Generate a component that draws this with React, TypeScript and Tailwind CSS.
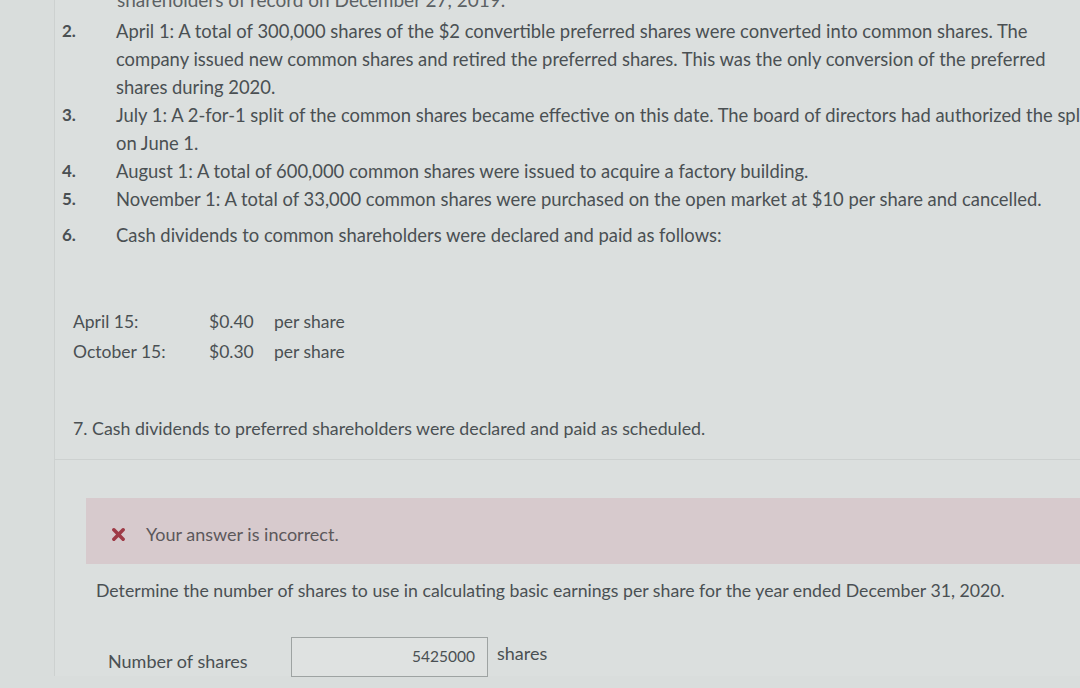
import React from "react";

const items = [
  {
    n: "2.",
    lines: [
      "April 1: A total of 300,000 shares of the $2 convertible preferred shares were converted into common shares. The",
      "company issued new common shares and retired the preferred shares. This was the only conversion of the preferred",
      "shares during 2020.",
    ],
  },
  {
    n: "3.",
    lines: [
      "July 1: A 2-for-1 split of the common shares became effective on this date. The board of directors had authorized the split",
      "on June 1.",
    ],
  },
  { n: "4.", lines: ["August 1: A total of 600,000 common shares were issued to acquire a factory building."] },
  { n: "5.", lines: ["November 1: A total of 33,000 common shares were purchased on the open market at $10 per share and cancelled."] },
  { n: "6.", lines: ["Cash dividends to common shareholders were declared and paid as follows:"], extra: true },
];

export default function App() {
  return (
    <div className="w-[1080px] h-[688px] overflow-hidden bg-[#d9dddc] text-[#4a5053] font-['Lato','Liberation_Sans',sans-serif]">
      <div className="ml-[54px] h-full border-l border-[#cdd1d0] bg-[#dbdfde]">
        <div className="-mt-[12px] pl-[62px] h-[24px] text-[19px] leading-[24px] text-[#5b6164] whitespace-nowrap">
          shareholders of record on December 27, 2019.
        </div>

        <ol className="mt-[5px] flex flex-col text-[18.4px] leading-[28px]">
          {items.map((it) => (
            <li key={it.n} className={`flex ${it.extra ? "mt-[8px]" : ""}`}>
              <span className="w-[61px] shrink-0 pl-[7px] font-bold text-[17px]">{it.n}</span>
              <div className="whitespace-nowrap">
                {it.lines.map((l) => (
                  <div key={l}>{l}</div>
                ))}
              </div>
            </li>
          ))}
        </ol>

        <div className="mt-[58px] pl-[18px] grid grid-cols-[136px_65px_auto] text-[17.5px] leading-[30px]">
          <span>April 15:</span>
          <span>$0.40</span>
          <span>per share</span>
          <span>October 15:</span>
          <span>$0.30</span>
          <span>per share</span>
        </div>

        <p className="mt-[47px] pl-[18px] text-[17.8px] leading-[28px] whitespace-nowrap">
          7. Cash dividends to preferred shareholders were declared and paid as scheduled.
        </p>

        <div className="mt-[17px] border-t border-[#cdd1d0]" />

        <div className="ml-[31px] mt-[38px] h-[66px] bg-[#d7cacd] flex items-center pt-[6px] pl-[26px] gap-[21px]">
          <svg width="13" height="13" viewBox="0 0 14 14" className="shrink-0">
            <path d="M2 2 L12 12 M12 2 L2 12" stroke="#9e3a46" strokeWidth="3.8" strokeLinecap="round" />
          </svg>
          <span className="text-[18px] text-[#5c585b]">Your answer is incorrect.</span>
        </div>

        <p className="mt-[13px] pl-[41px] text-[17.7px] leading-[28px] whitespace-nowrap">
          Determine the number of shares to use in calculating basic earnings per share for the year ended December 31, 2020.
        </p>

        <div className="mt-[32px] pl-[53px] flex items-center text-[18px]">
          <span className="w-[183px] pt-[8px]">Number of shares</span>
          <div className="w-[197px] h-[40px] border border-[#9ea3a2] bg-[#dfe2e1] flex items-center justify-end pr-[12px] text-[15.5px]">
            5425000
          </div>
          <span className="ml-[9px] -mt-[8px]">shares</span>
        </div>
      </div>
    </div>
  );
}
